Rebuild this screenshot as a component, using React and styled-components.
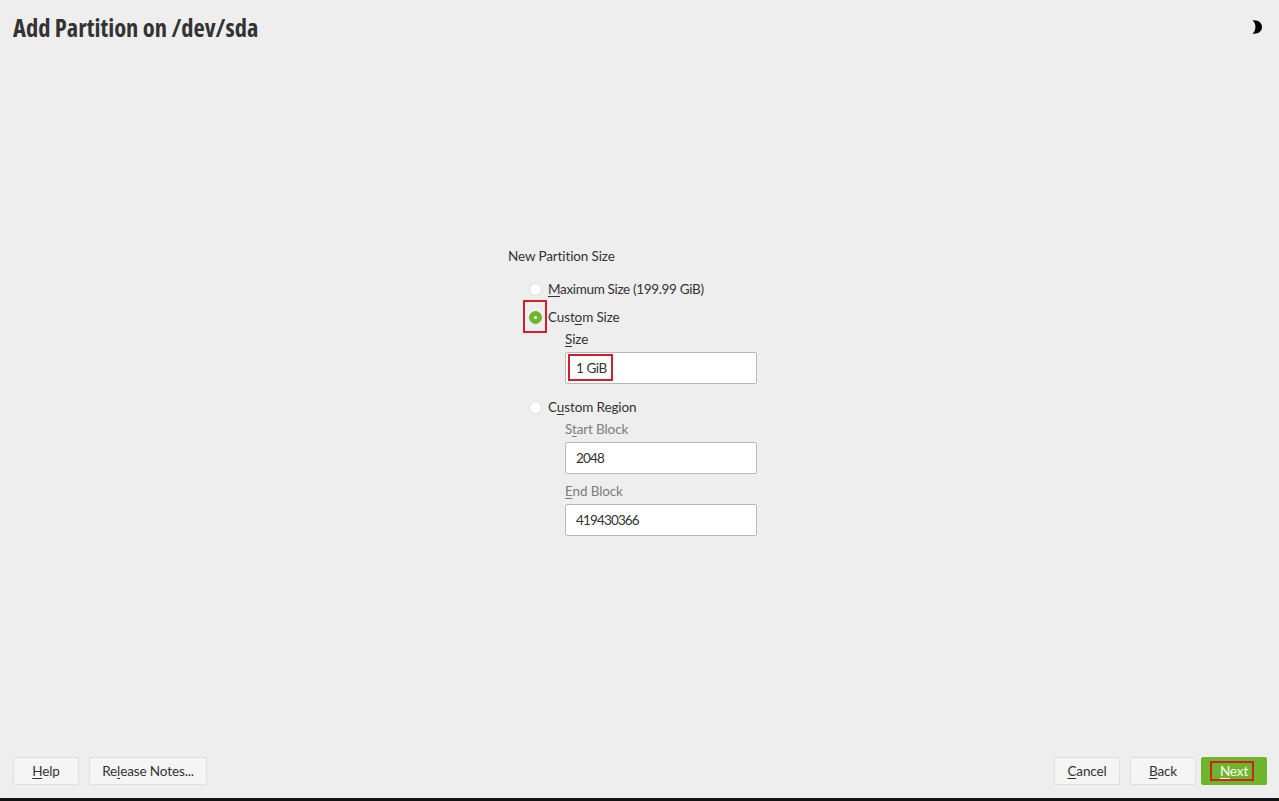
import React from "react";
import styled, { createGlobalStyle } from "styled-components";

const Global = createGlobalStyle`
  html, body { margin: 0; padding: 0; background: #eeeeee; }
  body { font-family: "Lato", "Noto Sans", sans-serif; font-size: 13.5px; letter-spacing: -0.12px; color: #333; overflow: hidden; }
`;
const Page = styled.div`
  box-sizing: border-box; width: 1279px; height: 801px; display: flex; flex-direction: column;
  background: #eeeeee; border-bottom: 3px solid #111;
`;
const Header = styled.header`
  display: flex; justify-content: space-between; align-items: flex-start; padding: 13px 13px 0 13px; height: 47px; box-sizing: border-box;
`;
const Title = styled.h1`
  margin: 0; font-family: "Open Sans", sans-serif; font-weight: 700; font-size: 24.5px; line-height: 30px; letter-spacing: 0; color: #333;
  font-stretch: condensed; white-space: nowrap;
`;
const ThemeIcon = styled.svg`width: 10px; height: 14px; margin: 7px 4px 0 0; display:block;`;
const Main = styled.main`flex: 1; display: flex; align-items: flex-start; padding: 200px 0 0 508px;`;
const Form = styled.section`width: 249px; display: flex; flex-direction: column;`;
const Legend = styled.div`height: 18px; line-height: 18px; margin-bottom: 9px;`;
const RadioRow = styled.label`
  position: relative; box-sizing: border-box; display: flex; align-items: center; gap: 6px; height: 28px; padding: 2px 0 0 21px;
  margin-top: ${p => p.$top || 0}px;
`;
const RadioText = styled.span`letter-spacing: ${p => p.$tight ? "-0.33px" : "inherit"};`;
const RadioDot = styled.span`
  box-sizing: border-box; width: 13px; height: 13px; border-radius: 50%; flex: none; display: flex; align-items: center; justify-content: center;
  background: ${p => p.$on ? "#6fb52c" : "#fff"}; border: 1px solid ${p => p.$on ? "#6fb52c" : "#dcdcdc"};
  &::after { content: ""; width: 3px; height: 3px; border-radius: 50%; background: ${p => p.$on ? "#fff" : "transparent"}; }
`;
const RadioMark = styled.span`
  position: absolute; left: 15px; top: -2px; width: 24px; height: 33px; box-sizing: border-box; border: 2px solid #d0202c;
`;
const Field = styled.div`display: flex; flex-direction: column; margin-left: 57px; margin-top: ${p => p.$top || 0}px;`;
const FieldLabel = styled.div`height: 18px; line-height: 18px; margin-bottom: 4px; color: ${p => p.$dim ? "#7d7d7d" : "#333"};`;
const InputBox = styled.div`
  position: relative; box-sizing: border-box; width: 192px; height: 32px; background: #fff; border: 1px solid #b9b9b9; border-radius: 2px;
  padding-left: 10px; line-height: 31px; color: #333; letter-spacing: ${p => p.$numeric ? "-0.85px" : "-0.45px"};
`;
const ValueMark = styled.span`
  position: absolute; left: 2px; top: 1px; width: 45px; height: 27px; box-sizing: border-box; border: 2px solid #d0202c;
`;
const Footer = styled.footer`display: flex; justify-content: space-between; padding: 0 12px 13px 13px;`;
const Group = styled.div`display: flex; gap: ${p => p.$gap}px;`;
const Button = styled.button`
  position: relative; box-sizing: border-box; height: 28px; width: ${p => p.$w}px; padding: 0 0 1px; font: inherit; letter-spacing: inherit; border-radius: 2px;
  border: 1px solid ${p => p.$primary ? "#6fb52c" : "#dfdfdf"}; background: ${p => p.$primary ? "#6fb52c" : "#f5f5f5"};
  color: ${p => p.$primary ? "#fff" : "#333"};
`;
const NextMark = styled.span`
  position: absolute; left: 8px; top: 3px; width: 44px; height: 20px; box-sizing: border-box; border: 2px solid #d0202c;
`;
const U = styled.span`text-decoration: underline; text-underline-offset: 2px; text-decoration-thickness: 1px;`;

export default function App() {
  return (
    <Page>
      <Global />
      <Header>
        <Title>Add Partition on /dev/sda</Title>
        <ThemeIcon viewBox="0 0 10 14"><path d="M0.5 0.3C6.5 -0.2 10 2.8 10 7C10 11.2 6.5 14.2 0.5 13.7C2.6 12 3.4 9.5 3.4 7C3.4 4.5 2.6 2 0.5 0.3Z" fill="#000" /></ThemeIcon>
      </Header>
      <Main>
        <Form>
          <Legend>New Partition Size</Legend>
          <RadioRow><RadioDot /><RadioText $tight><U>M</U>aximum Size (199.99 GiB)</RadioText></RadioRow>
          <RadioRow><RadioDot $on /><RadioMark /><RadioText>Cust<U>o</U>m Size</RadioText></RadioRow>
          <Field>
            <FieldLabel><U>S</U>ize</FieldLabel>
            <InputBox>1 GiB<ValueMark /></InputBox>
          </Field>
          <RadioRow $top={8}><RadioDot /><RadioText>C<U>u</U>stom Region</RadioText></RadioRow>
          <Field>
            <FieldLabel $dim>S<U>t</U>art Block</FieldLabel>
            <InputBox $numeric>2048</InputBox>
          </Field>
          <Field $top={8}>
            <FieldLabel $dim><U>E</U>nd Block</FieldLabel>
            <InputBox $numeric>419430366</InputBox>
          </Field>
        </Form>
      </Main>
      <Footer>
        <Group $gap={10}>
          <Button $w={66}><U>H</U>elp</Button>
          <Button $w={118}>Re<U>l</U>ease Notes...</Button>
        </Group>
        <Group $gap={10}>
          <Button $w={66}><U>C</U>ancel</Button>
          <Group $gap={5}>
            <Button $w={66}><U>B</U>ack</Button>
            <Button $w={66} $primary><U>N</U>ext<NextMark /></Button>
          </Group>
        </Group>
      </Footer>
    </Page>
  );
}
